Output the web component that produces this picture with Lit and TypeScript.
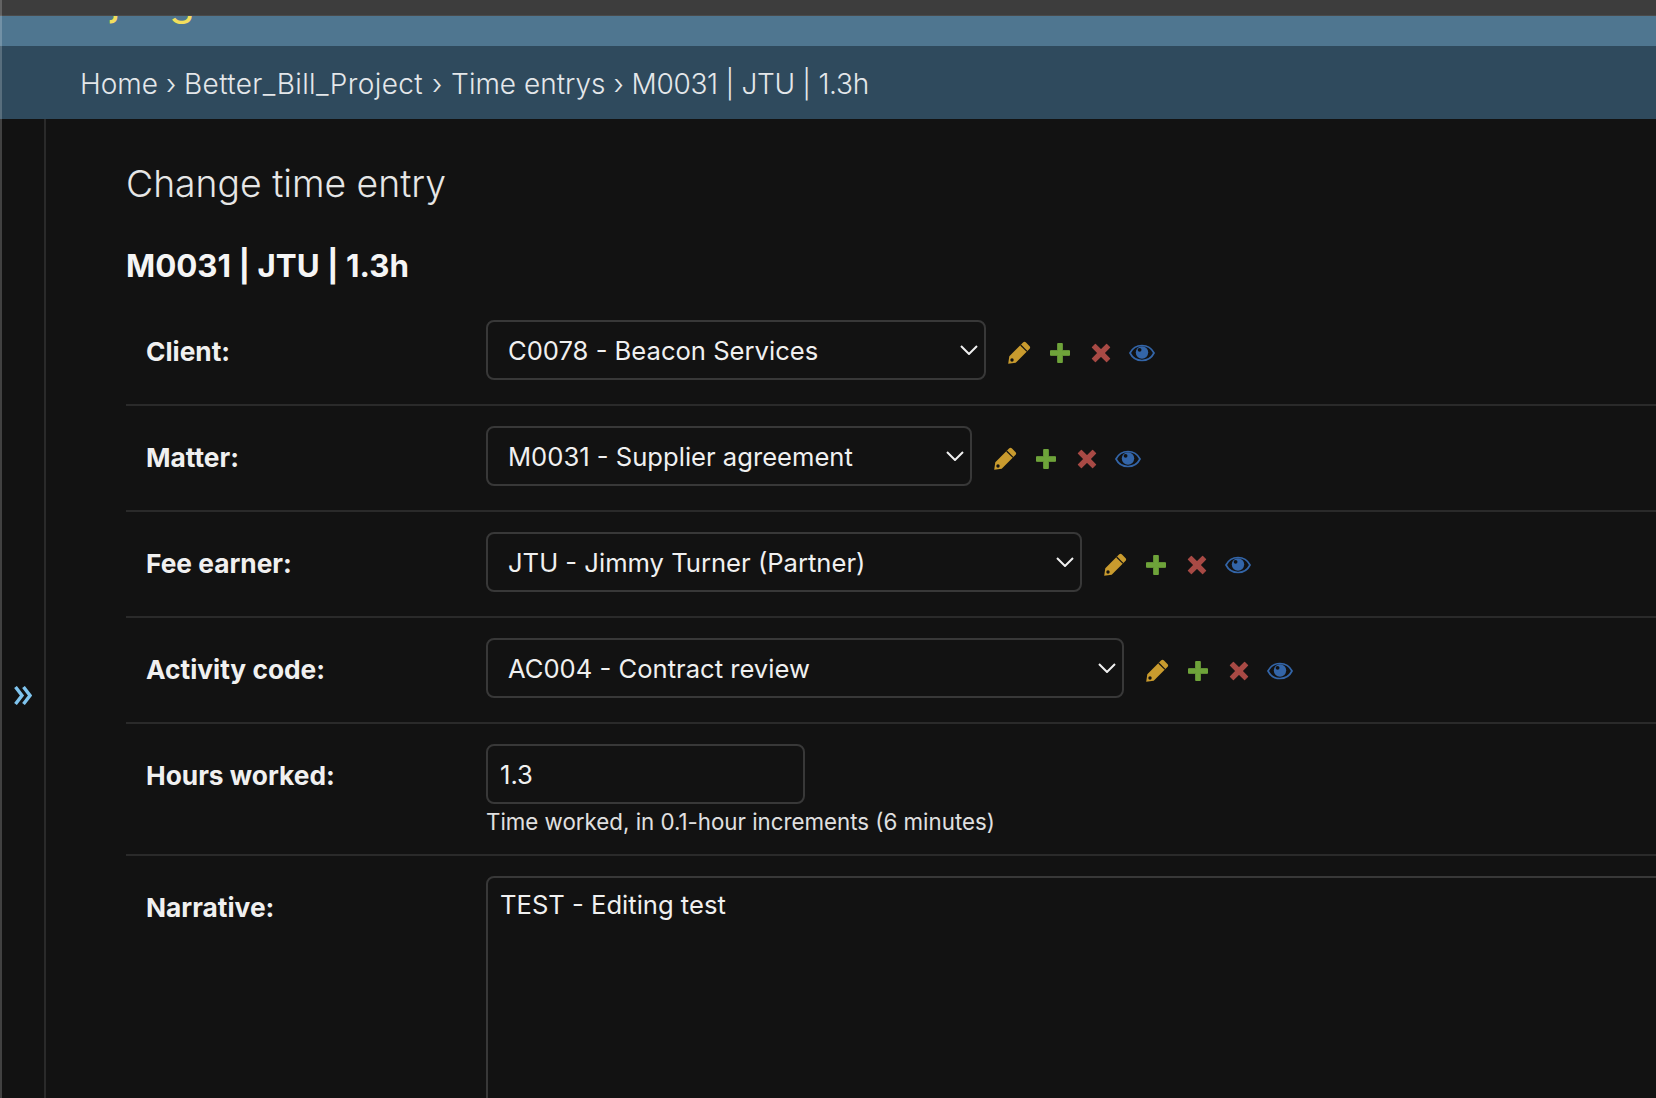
import { LitElement, html, css, svg } from "lit";
import { customElement } from "lit/decorators.js";

const pencil = svg`<path fill="#c99b2e" d="M1.2 22.8 L2.3 15.3 L16 1.6 C17 .6 18 .6 19 1.6 L22.4 5 C23.4 6 23.4 7 22.4 8 L8.7 21.7 Z"/><path stroke="#121212" stroke-width="1.2" d="M13.6 4 L20 10.4"/><circle cx="5" cy="19" r="1.7" fill="#121212"/>`;
const plus = svg`<path fill="#6ea33a" stroke="#6ea33a" stroke-width="1" stroke-linejoin="round" d="M9.7 2.5 h4.6 v7.2 h7.2 v4.6 h-7.2 v7.2 h-4.6 v-7.2 h-7.2 v-4.6 h7.2 Z"/>`;
const cross = svg`<path fill="#a84a45" stroke="#a84a45" stroke-width="1.2" stroke-linejoin="round" d="M6.4 3.4 L12 9 L17.6 3.4 L20.6 6.4 L15 12 L20.6 17.6 L17.6 20.6 L12 15 L6.4 20.6 L3.4 17.6 L9 12 L3.4 6.4 Z"/>`;
const eye = svg`<path fill="none" stroke="#3365a8" stroke-width="1.7" d="M1 12 C6 2 20 2 25 12 C20 22 6 22 1 12 Z"/><circle cx="13" cy="11.5" r="6.2" fill="#3365a8"/><circle cx="10.6" cy="8.8" r="1.9" fill="#121212"/>`;

const rows = [
  { label: "Client:", value: "C0078 - Beacon Services", width: 500 },
  { label: "Matter:", value: "M0031 - Supplier agreement", width: 486 },
  { label: "Fee earner:", value: "JTU - Jimmy Turner (Partner)", width: 596 },
  { label: "Activity code:", value: "AC004 - Contract review", width: 638 },
];

@customElement("app-root")
export class AppRoot extends LitElement {
  static styles = css`
    :host { display: block; position: relative; width: 1656px; height: 1098px; overflow: hidden; background: #121212; font-family: Inter, "Liberation Sans", sans-serif; color: #f5f5f5; }
    .strip { position: absolute; left: 0; top: 0; bottom: 0; width: 2px; background: rgba(255,255,255,.2); z-index: 2; }
    .top { height: 16px; box-sizing: border-box; background: #3d3d3d; border-bottom: 1px solid #4a4a4a; position: relative; z-index: 1; }
    .header { height: 30px; background: #4f7690; overflow: hidden; }
    .brand { font-size: 42px; line-height: 48px; margin: -40px 0 0 80px; color: #f2de5c; white-space: nowrap; }
    .crumbs { height: 73px; box-sizing: border-box; background: #2f4a5d; padding: 2px 0 0 80px; display: flex; align-items: center; font-size: 28px; font-weight: 300; color: #e4e7ea; white-space: pre; }
    .sep { width: 28px; text-align: center; }
    .sep.narrow { width: 26px; }
    .wide { letter-spacing: .38px; }
    .tight { letter-spacing: -.3px; }
    .main { display: flex; height: 979px; }
    .toggle { width: 42px; margin-left: 2px; border-right: 2px solid #2a2a2a; flex: none; display: flex; align-items: center; justify-content: center; padding-top: 174px; box-sizing: content-box; height: 805px; }
    .toggle svg { width: 18px; height: 19px; margin-left: -1px; }
    .content { flex: 1; min-width: 0; padding: 42px 0 0 80px; overflow: hidden; }
    h1 { margin: 0; font-size: 37.3px; line-height: 46px; font-weight: 300; color: #e6e6e6; }
    h2 { margin: 39px 0 0; font-size: 31.3px; line-height: 40px; font-weight: 700; color: #f5f5f5; }
    .form { margin-top: 14px; }
    .row { display: flex; padding: 20px 0 24px 20px; border-bottom: 2px solid #2a2a2a; box-sizing: border-box; }
    .row.hours { padding-bottom: 18px; }
    .row label { width: 340px; flex: none; font-size: 26.3px; font-weight: 700; line-height: 40px; padding-top: 12px; color: #f0f0f0; }
    .select { height: 60px; box-sizing: border-box; border: 2px solid #383838; border-radius: 8px; display: flex; align-items: center; justify-content: space-between; padding: 0 6px 0 20px; font-size: 25.6px; color: #f0f0f0; flex: none; }
    .chev { width: 18px; height: 10px; }
    .actions { display: flex; align-items: center; gap: 17px; margin-left: 21px; margin-top: 5px; }
    .actions svg { width: 24px; height: 24px; display: block; }
    .actions svg.eye { width: 26px; margin-left: -1px; }
    .field { flex: none; }
    .input { width: 319px; height: 60px; box-sizing: border-box; border: 2px solid #383838; border-radius: 8px; padding: 0 12px; font-size: 25.6px; display: flex; align-items: center; color: #f0f0f0; }
    .help { font-size: 22.3px; line-height: 28px; margin-top: 4px; color: #e0e0e0; }
    .textarea { width: 1400px; height: 400px; flex: none; box-sizing: border-box; border: 2px solid #383838; border-radius: 8px; padding: 11px 12px; font-size: 25.6px; line-height: 32px; color: #f0f0f0; }
    .row.last { border-bottom: 0; }
  `;

  render() {
    return html`
      <div class="strip"></div>
      <div class="top"></div>
      <div class="header"><div class="brand">Django administration</div></div>
      <div class="crumbs"><span>Home</span><span class="sep narrow">›</span><span class="wide">Better_Bill_Project</span><span class="sep">›</span><span>Time entrys</span><span class="sep narrow">›</span><span class="tight">M0031 | JTU | 1.3h</span></div>
      <div class="main">
        <div class="toggle">
          <svg viewBox="0 0 18 19" fill="none" stroke="#7fc4ee" stroke-width="3.4"><path d="M1.5 1 L8 9.5 L1.5 18"/><path d="M9.5 1 L16 9.5 L9.5 18"/></svg>
        </div>
        <div class="content">
          <h1>Change time entry</h1>
          <h2>M0031 | JTU | 1.3h</h2>
          <div class="form">
            ${rows.map(r => html`
              <div class="row">
                <label>${r.label}</label>
                <div class="select" style="width:${r.width}px">
                  <span>${r.value}</span>
                  <svg class="chev" viewBox="0 0 18 10" fill="none" stroke="#f0f0f0" stroke-width="2"><path d="M1 1 L9 9 L17 1"/></svg>
                </div>
                <div class="actions">
                  <svg viewBox="0 0 24 24">${pencil}</svg>
                  <svg viewBox="0 0 24 24">${plus}</svg>
                  <svg viewBox="0 0 24 24">${cross}</svg>
                  <svg class="eye" viewBox="0 0 26 24">${eye}</svg>
                </div>
              </div>`)}
            <div class="row hours">
              <label>Hours worked:</label>
              <div class="field">
                <div class="input">1.3</div>
                <div class="help">Time worked, in 0.1-hour increments (6 minutes)</div>
              </div>
            </div>
            <div class="row last">
              <label>Narrative:</label>
              <div class="textarea">TEST - Editing test</div>
            </div>
          </div>
        </div>
      </div>
    `;
  }
}
